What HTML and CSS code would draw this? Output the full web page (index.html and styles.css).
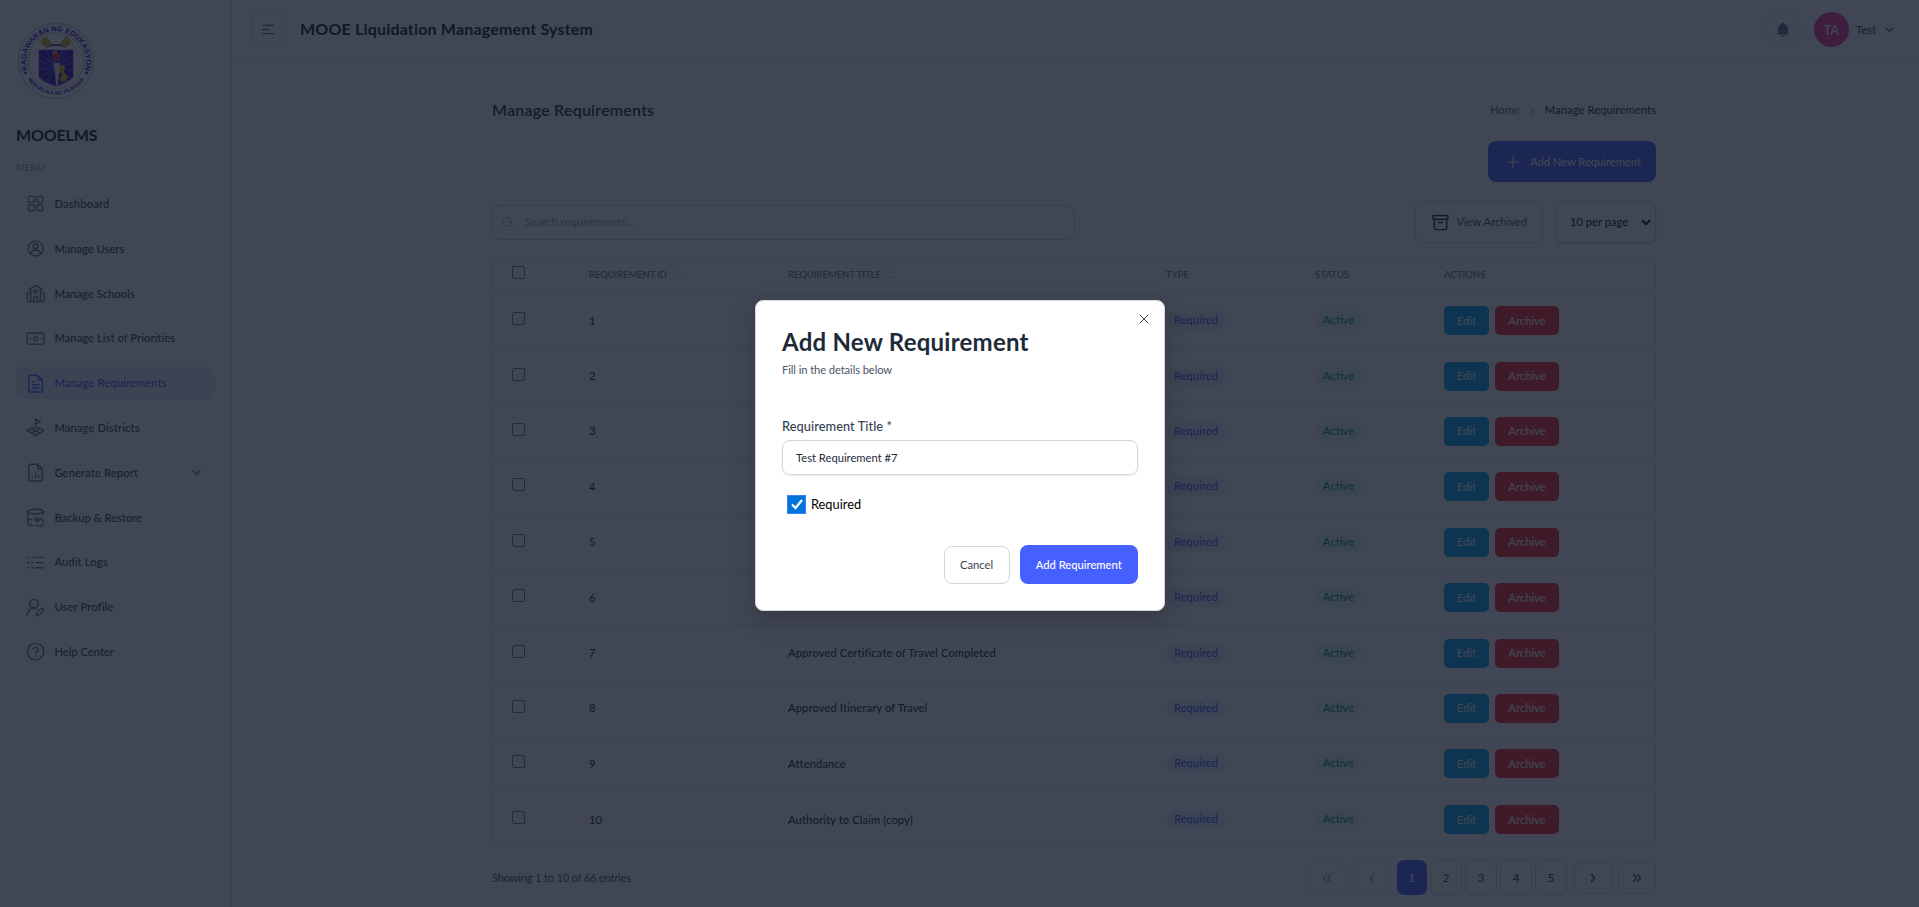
FILE: index.html
```html
<!DOCTYPE html>
<html lang="en">
<head>
<meta charset="utf-8">
<title>MOOE Liquidation Management System</title>
<link rel="stylesheet" href="styles.css">
</head>
<body>
<svg class="defs" width="0" height="0">
  <symbol id="chev-down" viewBox="0 0 24 24"><path d="M4 8l8 8 8-8"/></symbol>
  <symbol id="sort" viewBox="0 0 8 12"><path d="M1.2 4L4 1.2 6.8 4M1.2 8L4 10.8 6.8 8"/></symbol>
</svg>
<div class="app">
  <aside class="sidebar">
    <svg class="logo" viewBox="0 0 80 80">
      <defs>
        <path id="arc-top" d="M15.600 57.700A30 30 0 1 1 64.400 57.700"/>
        <path id="arc-bottom" d="M8.600 52A33.600 33.600 0 0 0 71.400 52"/>
      </defs>
      <circle cx="40" cy="40" r="37.5" class="ring"/>
      <circle cx="40" cy="40" r="28" class="ring"/>
      <text class="seal-top"><textPath href="#arc-top" startOffset="50%">KAGAWARAN NG EDUKASYON</textPath></text>
      <text class="seal-bottom"><textPath href="#arc-bottom" startOffset="50%">REPUBLIKA NG PILIPINAS</textPath></text>
      <circle cx="9.5" cy="52" r="1.4" fill="#3a10c8" stroke="none"/><circle cx="70.5" cy="52" r="1.4" fill="#3a10c8" stroke="none"/>
      <g stroke="none">
      <path d="M18 28h44l-4 2v27q-7 8-18 10-11-2-18-10V30z" fill="#d9dbe6"/>
      <path d="M23 29h34v27q-6 6-17 9-11-3-17-9z" fill="#3a0fc0"/>
      </g>
      <path d="M40 46L24 32M40 46L30 29M40 46L36 29M40 46L46 29M40 46L52 29M40 46L57 34M40 46L23 40M40 46L57 42M40 46L23 49M40 46L25 56M40 46L57 50M40 46L31 60M40 46L54 57" stroke="#a99ad0" stroke-width=".6"/>
      <g stroke="none">
      <path d="M26 18l4-3 5 7-2 4-5-1-3-4zM54 18l-4-3-5 7 2 4 5-1 3-4z" fill="#e0a81e"/>
      <path d="M37 31l3-2 3 5v5h-6z" fill="#e0a81e"/><circle cx="40.5" cy="36.500" r="4" fill="#c22a4a"/>
      <path d="M38 42h6l-2 22h-2z" fill="#e3e5ee"/><path d="M44 44l5 1-1 6 4 4-2 5-5 1-1-4 2-3-3-4z" fill="#e0a81e"/>
      </g>
      <path d="M30 26q10-4 20 0M34 23l12 2M46 23l-12 2" stroke="#38415c" stroke-width=".9"/>
    </svg>
    <div class="brand">MOOELMS</div>
    <div class="menu-label">MENU</div>
    <nav class="menu">
      <a class="item"><svg class="ic" viewBox="0 0 24 24"><rect x="3" y="3" width="7.500" height="7.500" rx="1.800"/><rect x="13.500" y="3" width="7.500" height="7.500" rx="1.800"/><rect x="3" y="13.500" width="7.500" height="7.500" rx="1.800"/><rect x="13.500" y="13.500" width="7.500" height="7.500" rx="1.800"/></svg><span class="m1">Dashboard</span></a>
      <a class="item"><svg class="ic" viewBox="0 0 24 24"><circle cx="12" cy="12" r="9.300"/><circle cx="12" cy="9" r="3"/><path d="M6 18.500c0-3 2.500-4.500 6-4.500s6 1.500 6 4.500"/></svg><span>Manage Users</span></a>
      <a class="item"><svg class="ic" viewBox="0 0 24 24"><path d="M4 6.500l8-4.500 8 4.500M6 6v15.500M18 6v15.500M6 10.500H3.500A2 2 0 0 0 1.500 12.500v7.500a2 2 0 0 0 2 2h17a2 2 0 0 0 2-2v-7.500a2 2 0 0 0-2-2H18M9.500 21.500V18a2.500 2.500 0 0 1 5 0v3.500"/><circle cx="12" cy="9.500" r="2"/></svg><span>Manage Schools</span></a>
      <a class="item"><svg class="ic" viewBox="0 0 24 24"><rect x="1.500" y="5" width="21" height="14" rx="2"/><circle cx="12" cy="12" r="2.400"/><path d="M6 12h.1M18 12h.1"/></svg><span class="m4">Manage List of Priorities</span></a>
      <a class="item active"><svg class="ic" viewBox="0 0 24 24"><path d="M14.500 1.500H5.500a2 2 0 0 0-2 2v17a2 2 0 0 0 2 2h13a2 2 0 0 0 2-2V7.500zM14.500 1.500v4a2 2 0 0 0 2 2h4M8 9.500h2M8 13.500h8M8 17.500h8"/></svg><span class="m5">Manage Requirements</span></a>
      <a class="item"><svg class="ic" viewBox="0 0 24 24"><path d="M12 13V1.500l6 3-6 3M9 11.800L1.500 15.500 12 22l10.500-6.500L15 11.800M6.500 13l10.500 6M17.500 13L7 19"/></svg><span class="m5">Manage Districts</span></a>
      <a class="item"><svg class="ic" viewBox="0 0 24 24"><path d="M14.500 1.500H5.500a2 2 0 0 0-2 2v17a2 2 0 0 0 2 2h13a2 2 0 0 0 2-2V7.500zM14.500 1.500v4a2 2 0 0 0 2 2h4M8 17v1.500M12 12.500v6M16 15v3.500"/></svg><span class="m5">Generate Report</span><svg class="caret" viewBox="0 0 24 24"><use href="#chev-down"/></svg></a>
      <a class="item"><svg class="ic" viewBox="0 0 24 24"><ellipse cx="12" cy="4.500" rx="9.500" ry="3"/><path d="M2.500 4.500v14.500c0 1.700 2.500 2.800 6 3M21.500 4.500V8M2.500 12c0 1.400 2 2.400 5 2.800M12 11.500v4.500h4.500M12.500 15.500a5 5 0 1 1 0 5.500"/></svg><span>Backup &amp; Restore</span></a>
      <a class="item"><svg class="ic" viewBox="0 0 24 24"><path d="M2 5.500h1.500M7.500 5.500H9M12.500 5.500h9.500M2 12h1.500M7.500 12H9M12.500 12h9.500M2 18.500h1.500M7.500 18.500H9M12.500 18.500h9.500"/></svg><span class="m5">Audit Logs</span></a>
      <a class="item"><svg class="ic" viewBox="0 0 24 24"><circle cx="10" cy="7" r="5.300"/><path d="M1.500 21.500a8.500 8.500 0 0 1 11.500-8M21.500 13.500a2 2 0 0 0-2.800 0l-4.500 4.500-1.200 4 4-1.200 4.500-4.500a2 2 0 0 0 0-2.800z"/></svg><span class="m5">User Profile</span></a>
      <a class="item"><svg class="ic" viewBox="0 0 24 24"><circle cx="12" cy="12" r="10.300"/><path d="M9 9a3 3 0 0 1 5.900 1c0 2-2.900 2.500-2.900 4M12 17.500v.1"/></svg><span>Help Center</span></a>
    </nav>
  </aside>
  <div class="page">
    <header class="topbar">
      <button class="burger"><svg viewBox="0 0 16 12"><path d="M2 1.500h12M2 6h6.500M2 10.500h12"/></svg></button>
      <h1>MOOE Liquidation Management System</h1>
      <div class="user">
        <span class="bell"><svg viewBox="0 0 14 16"><path d="M7 .8c.7 0 1.200.5 1.200 1.100 2.300.5 3.700 2.300 3.700 4.700v3.800l1 1v1.100H1.100v-1.100l1-1V6.600c0-2.400 1.400-4.200 3.700-4.700C5.800 1.300 6.300.8 7 .8zM5 13.500h4a2 1.600 0 0 1-4 0z"/></svg></span>
        <span class="avatar">TA</span>
        <span class="uname">Test</span>
        <svg class="caret" viewBox="0 0 24 24"><use href="#chev-down"/></svg>
      </div>
    </header>
    <main class="content">
      <div class="title-row">
        <h2>Manage Requirements</h2>
        <div class="crumbs"><span class="home">Home</span><svg viewBox="0 0 6 10"><path d="M1 1l4 4-4 4"/></svg><span class="here">Manage Requirements</span></div>
      </div>
      <div class="add-row"><button class="add"><svg viewBox="0 0 12 12"><path d="M6 .5v11M.5 6h11"/></svg><span>Add New Requirement</span></button></div>
      <div class="tools">
        <div class="search"><svg viewBox="0 0 12 12"><circle cx="5.300" cy="5.300" r="4.600"/><path d="M8.700 8.700l2.700 2.700"/></svg><span>Search requirements...</span></div>
        <div class="tools-right">
          <button class="archived"><svg viewBox="0 0 18 18"><rect x="1" y="1.500" width="16" height="4" rx=".8"/><path d="M2.500 5.500v9.300a1.700 1.700 0 0 0 1.700 1.700h9.600a1.700 1.700 0 0 0 1.700-1.700V5.500M7 9h4"/></svg><span>View Archived</span></button>
          <div class="select"><span>10 per page</span><svg viewBox="0 0 10 7"><path d="M1 1.200l4 4 4-4"/></svg></div>
        </div>
      </div>
      <section class="table">
        <div class="row head"><i class="cb"></i><span><b class="h-id">REQUIREMENT ID</b><svg class="sort"><use href="#sort"/></svg></span><span><b class="h-title">REQUIREMENT TITLE</b><svg class="sort"><use href="#sort"/></svg></span><span>TYPE</span><span>STATUS</span><span>ACTIONS</span></div>
        <div class="row"><i class="cb"></i><span>1</span><span></span><span><em class="pill req">Required</em></span><span><em class="pill act">Active</em></span><span><button class="edit">Edit</button><button class="arch">Archive</button></span></div>
        <div class="row"><i class="cb"></i><span>2</span><span></span><span><em class="pill req">Required</em></span><span><em class="pill act">Active</em></span><span><button class="edit">Edit</button><button class="arch">Archive</button></span></div>
        <div class="row"><i class="cb"></i><span>3</span><span></span><span><em class="pill req">Required</em></span><span><em class="pill act">Active</em></span><span><button class="edit">Edit</button><button class="arch">Archive</button></span></div>
        <div class="row"><i class="cb"></i><span>4</span><span></span><span><em class="pill req">Required</em></span><span><em class="pill act">Active</em></span><span><button class="edit">Edit</button><button class="arch">Archive</button></span></div>
        <div class="row"><i class="cb"></i><span>5</span><span></span><span><em class="pill req">Required</em></span><span><em class="pill act">Active</em></span><span><button class="edit">Edit</button><button class="arch">Archive</button></span></div>
        <div class="row"><i class="cb"></i><span>6</span><span></span><span><em class="pill req">Required</em></span><span><em class="pill act">Active</em></span><span><button class="edit">Edit</button><button class="arch">Archive</button></span></div>
        <div class="row"><i class="cb"></i><span>7</span><span class="name">Approved Certificate of Travel Completed</span><span><em class="pill req">Required</em></span><span><em class="pill act">Active</em></span><span><button class="edit">Edit</button><button class="arch">Archive</button></span></div>
        <div class="row"><i class="cb"></i><span>8</span><span class="name">Approved Itinerary of Travel</span><span><em class="pill req">Required</em></span><span><em class="pill act">Active</em></span><span><button class="edit">Edit</button><button class="arch">Archive</button></span></div>
        <div class="row"><i class="cb"></i><span>9</span><span class="name">Attendance</span><span><em class="pill req">Required</em></span><span><em class="pill act">Active</em></span><span><button class="edit">Edit</button><button class="arch">Archive</button></span></div>
        <div class="row"><i class="cb"></i><span>10</span><span class="name">Authority to Claim (copy)</span><span><em class="pill req">Required</em></span><span><em class="pill act">Active</em></span><span><button class="edit">Edit</button><button class="arch">Archive</button></span></div>
      </section>
      <footer class="pager">
        <span class="showing">Showing 1 to 10 of 66 entries</span>
        <div class="pages">
          <button class="nav off"><svg viewBox="0 0 10 10"><path d="M4.500 1.500L1.500 5l3 3.500M8.500 1.500L5.500 5l3 3.500"/></svg></button>
          <button class="nav off"><svg viewBox="0 0 10 10"><path d="M6.500 1.500L3.500 5l3 3.500"/></svg></button>
          <div class="nums"><button class="num on">1</button><button class="num">2</button><button class="num">3</button><button class="num">4</button><button class="num">5</button></div>
          <button class="nav"><svg viewBox="0 0 10 10"><path d="M3.500 1.500l3 3.500-3 3.500"/></svg></button>
          <button class="nav"><svg viewBox="0 0 10 10"><path d="M1.500 1.500l3 3.500-3 3.500M5.500 1.500l3 3.500-3 3.500"/></svg></button>
        </div>
      </footer>
    </main>
  </div>
</div>
<div class="overlay">
  <div class="modal">
    <svg class="close" viewBox="0 0 10 10"><path d="M1 1l8 8M9 1L1 9"/></svg>
    <h3>Add New Requirement</h3>
    <p class="sub">Fill in the details below</p>
    <label class="label">Requirement Title *</label>
    <div class="input"><span>Test Requirement #7</span></div>
    <div class="check"><i class="checked"><svg viewBox="0 0 16 16"><path d="M3 8.500l3.500 3.500L13 4"/></svg></i><span>Required</span></div>
    <div class="actions"><button class="cancel">Cancel</button><button class="submit">Add Requirement</button></div>
  </div>
</div>
</body>
</html>
```
FILE: styles.css
```css
* { box-sizing: border-box; }
body { margin: 0; width: 1919px; height: 907px; overflow: hidden; background: #fff; font-family: Lato, "Open Sans", sans-serif; font-size: 11.2px; font-weight: 500; color: #1e2939; white-space: nowrap; line-height: 16px; }
svg { fill: none; stroke: currentColor; stroke-width: 1.5; stroke-linecap: round; stroke-linejoin: round; flex: none; }
button { font: inherit; color: inherit; margin: 0; padding: 0; background: none; border: 0; display: flex; align-items: center; justify-content: center; }
h1, h2, h3, p { margin: 0; }
.defs { display: block; position: absolute; }
.app { display: flex; height: 907px; }

.sidebar { width: 232px; border-right: 1px solid #e0e3e8; padding: 21px 16px; flex: none; }
.logo { display: block; width: 80px; height: 80px; overflow: visible; }
.ring { stroke: #8e94a8; stroke-width: .6; }
.seal-top, .seal-bottom { fill: #3a10c8; stroke: none; font-family: "Liberation Sans", sans-serif; font-weight: 700; text-anchor: middle; }
.seal-top { font-size: 7.4px; }
.seal-bottom { font-size: 5.2px; }
.brand { margin-top: 24px; height: 20px; line-height: 20px; font-size: 16px; font-weight: 700; letter-spacing: -.15px; color: #101828; }
.menu-label { margin-top: 15px; height: 16px; font-size: 9.6px; font-weight: 400; color: #99a1af; }
.menu { margin-top: 12px; display: flex; flex-direction: column; gap: 12.8px; }
.item { height: 32px; width: 199px; border-radius: 8px; padding: 0 13px 0 9.6px; display: flex; align-items: center; gap: 9.6px; color: #364153; }
.m1 { letter-spacing: .18px; }
.m4 { letter-spacing: .05px; }
.m5 { letter-spacing: .12px; }
.ic { width: 19.2px; height: 19.2px; color: #667085; stroke-width: 1.7; }
.item .caret { margin-left: auto; }
.caret { width: 11px; height: 11px; color: #364153; stroke-width: 2.4; }
.active { background: #ecf3ff; color: #465fff; }
.active .ic { color: #465fff; }

.page { flex: 1; }
.topbar { height: 61px; border-bottom: 1px solid #e0e3e8; display: flex; align-items: center; padding: 0 24px 1px 19px; }
.burger { width: 35px; height: 35px; border: 1px solid #e4e7ec; border-radius: 8px; color: #667085; }
.burger svg { width: 15px; height: 11px; }
h1 { margin: 0 0 1px 14px; font-size: 16px; font-weight: 700; letter-spacing: .18px; color: #101828; }
.user { margin-left: auto; display: flex; align-items: center; color: #364153; }
.bell { width: 35px; height: 35px; border: 1px solid #e4e7ec; border-radius: 50%; display: flex; align-items: center; justify-content: center; color: #667085; margin-right: 13px; }
.bell svg { width: 14px; height: 16px; fill: currentColor; stroke: none; }
.avatar { width: 35px; height: 35px; border-radius: 50%; background: #f6339a; color: #fff; font-size: 12.8px; font-weight: 600; display: flex; align-items: center; justify-content: center; margin-right: 7px; }
.uname { margin-right: 8px; }

.content { width: 1164px; margin: 0 0 0 260px; padding-top: 37px; }
.title-row { display: flex; justify-content: space-between; align-items: center; height: 24px; }
h2 { font-size: 16px; font-weight: 600; letter-spacing: .22px; color: #1e2939; }
.crumbs { display: flex; align-items: center; }
.crumbs svg { width: 6px; height: 9px; margin: 0 10px 0 9px; color: #6a7282; stroke-width: 1; }
.home { color: #6a7282; font-weight: 400; }
.here { font-weight: 400; letter-spacing: .08px; }
.add-row { display: flex; justify-content: flex-end; margin-top: 19px; }
.add { width: 168px; height: 41px; border-radius: 8px; background: #465fff; color: #fff; gap: 11px; padding-left: 4px; letter-spacing: -.05px; }
.add svg { width: 12px; height: 12px; stroke-width: 1.2; }
.tools { display: flex; justify-content: space-between; align-items: center; margin-top: 19px; height: 42px; }
.search { width: 583px; height: 35px; border: 1px solid #d1d5dc; border-radius: 8px; padding: 0 9px; display: flex; align-items: center; gap: 12px; color: #99a1af; font-weight: 400; }
.search svg { width: 11px; height: 11px; stroke-width: 1; }
.tools-right { display: flex; gap: 13px; }
.archived { width: 128px; height: 42px; border: 1px solid #d8dce2; border-radius: 7px; gap: 7.5px; padding-left: 1px; color: #4a5565; font-weight: 400; }
.archived svg { width: 17px; height: 17px; color: #1e2939; }
.select { width: 100px; height: 42px; border: 1px solid #d1d5dc; border-radius: 7px; box-shadow: 0 1px 2px rgba(0,0,0,.2); display: flex; align-items: center; justify-content: space-between; padding: 0 4px 0 13px; color: #000; font-weight: 400; }
.select svg { width: 10px; height: 7px; stroke-width: 2; stroke-linecap: butt; }

.table { margin-top: 13px; border: 1px solid #e4e7ec; border-radius: 10px; overflow: hidden; }
.row { display: grid; grid-template-columns: 77px 199px 378px 149px 129px 1fr; height: 55.4px; padding-left: 19px; align-items: center; border-bottom: 1px solid #e0e3e8; }
.row:last-child { border-bottom: 0; }
.row > span { display: flex; align-items: center; }
.row.head { height: 36.500px; font-size: 9.6px; color: #6a7282; }
.head b { font-weight: 500; }
.h-id { letter-spacing: -.16px; }
.h-title { letter-spacing: -.1px; }
.name { letter-spacing: .1px; }
.sort { width: 7px; height: 11px; margin-left: 8px; color: #99a1af; stroke-width: .8; }
.cb { width: 13px; height: 13px; border: 1px solid #767676; border-radius: 2px; margin-bottom: 4px; }
.pill { font-style: normal; height: 19px; line-height: 18px; border-radius: 10px; text-align: center; }
.req { width: 60px; background: #ecf3ff; color: #465fff; }
.act { width: 47px; background: #ecfdf3; color: #039855; }
.edit, .arch { height: 29px; border-radius: 5px; color: #fff; }
.edit { width: 45px; background: #00a6f4; margin-right: 6px; }
.arch { width: 64px; background: #fb2c36; }

.pager { display: flex; justify-content: space-between; align-items: center; margin-top: 12px; height: 35px; }
.showing { color: #4a5565; font-weight: 400; letter-spacing: -.23px; }
.pages { display: flex; align-items: center; gap: 6.500px; color: #364153; }
.nav { width: 38px; height: 32px; border: 1px solid #d8dce2; border-radius: 7px; }
.nav svg { width: 10px; height: 10px; stroke-width: 1.300; }
.off { opacity: .5; }
.nums { display: flex; gap: 3px; }
.num { width: 32px; height: 35px; border: 1px solid #d1d5dc; border-radius: 7px; }
.on { width: 30px; background: #465fff; border: 0; color: #fff; }

.overlay { position: absolute; inset: 0; background: rgba(16,24,40,.8); display: flex; align-items: flex-start; justify-content: center; padding: 300px 0 0 1px; }
.modal { position: relative; width: 410px; height: 311px; background: #fff; border: 1px solid #d1d5dc; border-radius: 8px; padding: 26px 26px; box-shadow: 0 8px 24px rgba(0,0,0,.2); }
.close { position: absolute; right: 15px; top: 13px; width: 10px; height: 10px; color: #444; stroke-width: 1; }
h3 { font-size: 24px; line-height: 30px; font-weight: 700; letter-spacing: .24px; color: #1e2939; }
.sub { margin-top: 5px; color: #4a5565; font-weight: 400; letter-spacing: -.1px; }
.label { display: block; margin-top: 39px; font-size: 12.8px; line-height: 18px; color: #364153; letter-spacing: .06px; }
.input { margin-top: 5px; height: 35px; border: 1px solid #d1d5dc; border-radius: 8px; box-shadow: 0 1px 2px rgba(16,24,40,.08); padding: 0 13px; display: flex; align-items: center; font-weight: 400; }
.check { display: flex; align-items: center; gap: 5px; margin: 19px 0 0 5px; height: 20px; font-size: 12.8px; font-weight: 400; color: #000; }
.checked { width: 19px; height: 19px; background: #0075d9; border: 1.500px solid #3b82f6; display: flex; align-items: center; justify-content: center; color: #fff; }
.checked svg { width: 16px; height: 16px; stroke-width: 2.200; stroke-linecap: butt; stroke-linejoin: miter; }
.actions { display: flex; justify-content: flex-end; align-items: center; gap: 10px; margin-top: 31px; height: 39px; }
.cancel { width: 66px; height: 38px; border: 1px solid #d1d5dc; border-radius: 8px; color: #364153; font-weight: 400; }
.submit { width: 118.500px; height: 39px; border-radius: 8px; background: #465fff; color: #fff; }
```
